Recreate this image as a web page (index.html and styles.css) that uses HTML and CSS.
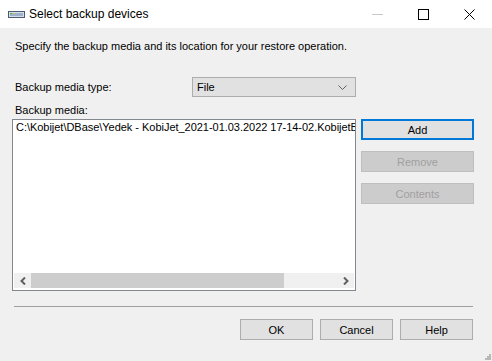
FILE: index.html
```html
<!DOCTYPE html>
<html lang="en">
<head>
    <meta charset="UTF-8">
    <title>Select backup devices</title>
    <link rel="stylesheet" href="styles.css">
</head>
<body>
<div class="window">
    <div class="titlebar">
        <svg class="app-icon" width="17" height="7" viewBox="0 0 17 7">
            <rect x="0.5" y="0.5" width="16" height="6" fill="#d8dde6" stroke="#4a5a78"/>
            <rect x="2" y="2" width="13" height="3" fill="#9fb0cc"/>
            <rect x="2" y="2" width="2" height="1" fill="#3ec23e"/>
            <rect x="5" y="2" width="2" height="1" fill="#e0c040"/>
        </svg>
        <span class="title">Select backup devices</span>
        <div class="caption-btns">
            <span class="cap"><svg width="11" height="1"><rect width="11" height="1" fill="#c8c8c8"/></svg></span>
            <span class="cap"><svg width="11" height="11"><rect x="0.5" y="0.5" width="10" height="10" fill="none" stroke="#000"/></svg></span>
            <span class="cap"><svg width="11" height="11"><path d="M0.5 0.5 L10.5 10.5 M10.5 0.5 L0.5 10.5" stroke="#000" stroke-width="1"/></svg></span>
        </div>
    </div>

    <div class="content">
        <p class="intro">Specify the backup media and its location for your restore operation.</p>

        <div class="row-type">
            <label>Backup media type:</label>
            <div class="combo">
                <span>File</span>
                <svg width="9" height="5" viewBox="0 0 9 5"><path d="M0.5 0.5 L4.5 4.5 L8.5 0.5" fill="none" stroke="#606060"/></svg>
            </div>
        </div>

        <div class="label-media">Backup media:</div>

        <div class="media-row">
            <div class="listbox">
                <div class="items">
                    <div class="item">C:\Kobijet\DBase\Yedek - KobiJet_2021-01.03.2022 17-14-02.KobijetB</div>
                </div>
                <div class="hscroll">
                    <span class="arrow"><svg width="6" height="8" viewBox="0 0 6 8"><path d="M5 0.5 L1.5 4 L5 7.5" fill="none" stroke="#606060" stroke-width="2"/></svg></span>
                    <div class="track"><div class="thumb"></div></div>
                    <span class="arrow"><svg width="6" height="8" viewBox="0 0 6 8"><path d="M1 0.5 L4.5 4 L1 7.5" fill="none" stroke="#606060" stroke-width="2"/></svg></span>
                </div>
            </div>
            <div class="side-btns">
                <button class="btn focus">Add</button>
                <button class="btn disabled">Remove</button>
                <button class="btn disabled">Contents</button>
            </div>
        </div>

        <hr class="sep">

        <div class="footer">
            <button class="btn">OK</button>
            <button class="btn">Cancel</button>
            <button class="btn">Help</button>
        </div>
    </div>
    <svg class="grip" width="7" height="7" viewBox="0 0 7 7">
        <rect x="5" y="1" width="2" height="2" fill="#b8b8b8"/>
        <rect x="3" y="3" width="2" height="2" fill="#b8b8b8"/>
        <rect x="5" y="3" width="2" height="2" fill="#b8b8b8"/>
        <rect x="1" y="5" width="2" height="2" fill="#b8b8b8"/>
        <rect x="3" y="5" width="2" height="2" fill="#b8b8b8"/>
        <rect x="5" y="5" width="2" height="2" fill="#b8b8b8"/>
    </svg>
</div>
</body>
</html>
```

FILE: styles.css
```css
body {
    margin: 0;
    font-family: 'Liberation Sans', Arial, sans-serif;
    font-size: 11px;
    color: #000000;
    background: #f0f0f0;
}

.window {
    position: relative;
    width: 492px;
    height: 361px;
    background: #f0f0f0;
    overflow: hidden;
}

.titlebar {
    height: 28px;
    background: #ffffff;
    display: flex;
    align-items: center;
}

.app-icon {
    margin-left: 8px;
    margin-right: 4px;
}

.title {
    font-size: 12px;
    color: #000000;
}

.caption-btns {
    margin-left: auto;
    display: flex;
    height: 28px;
}

.cap {
    width: 46px;
    display: flex;
    align-items: center;
    justify-content: center;
}

.intro {
    margin: 12px 0 0 3px;
    line-height: 13px;
}

.content {
    padding: 0 19px 0 12px;
}

.row-type {
    display: flex;
    align-items: center;
    margin-top: 24px;
}

.row-type label {
    width: 177px;
    padding-left: 3px;
}

.combo {
    width: 150px;
    height: 18px;
    border: 1px solid #adadad;
    background: #e1e1e1;
    display: flex;
    align-items: center;
    justify-content: space-between;
    padding: 0 8px 0 4px;
}

.label-media {
    margin: 7px 0 0 3px;
    line-height: 13px;
}

.media-row {
    display: flex;
    gap: 5px;
    margin-top: 2px;
}

.listbox {
    width: 342px;
    height: 170px;
    border: 1px solid #828790;
    background: #ffffff;
    display: flex;
    flex-direction: column;
}

.items {
    flex: 1;
    padding: 1px 0 0 3px;
    overflow: hidden;
    white-space: nowrap;
}

.item {
    line-height: 13px;
    letter-spacing: -0.03px;
}

.hscroll {
    height: 15px;
    margin: 0 1px 2px 1px;
    background: #f0f0f0;
    display: flex;
    align-items: center;
}

.arrow {
    width: 17px;
    display: flex;
    justify-content: center;
}

.track {
    flex: 1;
    height: 15px;
}

.thumb {
    width: 253px;
    height: 15px;
    background: #cdcdcd;
}

.side-btns {
    display: flex;
    flex-direction: column;
    gap: 11px;
}

.btn {
    font-family: 'Liberation Sans', Arial, sans-serif;
    font-size: 11px;
    width: 113px;
    height: 21px;
    background: #e1e1e1;
    border: 1px solid #adadad;
    color: #000000;
    padding: 0;
    margin: 0;
}

.btn.focus {
    border: 2px solid #0078d7;
}

.btn.disabled {
    background: #cccccc;
    border-color: #bfbfbf;
    color: #a0a0a0;
}

.sep {
    margin: 15px 0 0 2px;
    border: none;
    border-top: 1px solid #a0a0a0;
    height: 0;
}

.footer {
    display: flex;
    justify-content: flex-end;
    gap: 7px;
    margin-top: 12px;
}

.footer .btn {
    width: 73px;
}

.grip {
    position: absolute;
    right: 1px;
    bottom: 1px;
}
```
